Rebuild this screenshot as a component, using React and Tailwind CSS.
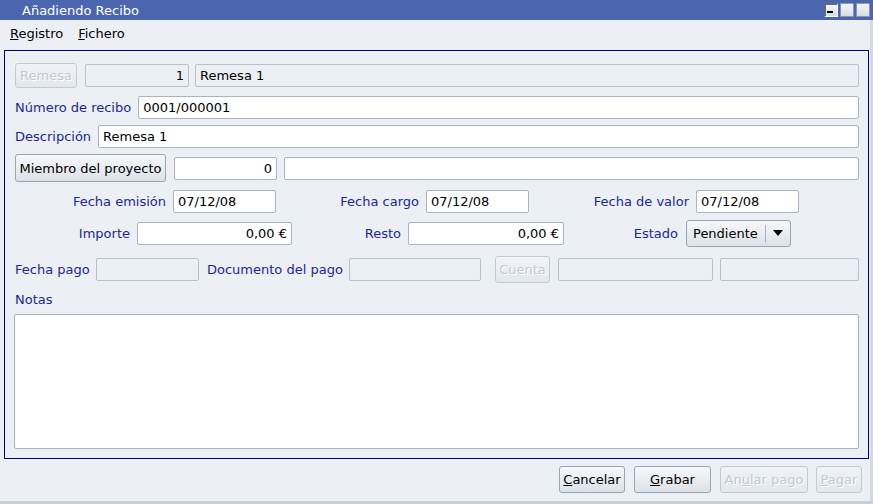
import React from 'react';

const font = { fontFamily: '"DejaVu Sans", Verdana, sans-serif' };

const Field = ({ w, value = '', right, disabled, grow }) => (
  <div
    className={`h-[23px] border rounded-[2px] flex items-center px-[4px] pt-[1px] whitespace-nowrap overflow-hidden text-black ${
      disabled ? 'bg-[#eceff4] border-[#b6c1ce]' : 'bg-white border-[#a7b4c4]'
    } ${right ? 'justify-end' : 'justify-start'} ${grow ? 'flex-1' : 'shrink-0'}`}
    style={grow ? undefined : { width: w }}
  >
    {value}
  </div>
);

const Label = ({ children, w, right }) => (
  <div
    className={`text-[#1b2792] whitespace-nowrap shrink-0 pt-[2px] ${right ? 'text-right' : ''}`}
    style={w ? { width: w } : undefined}
  >
    {children}
  </div>
);

const Button = ({ children, w, h = 27, disabled }) => (
  <div
    className={`shrink-0 flex items-center justify-center rounded-[3px] border whitespace-nowrap pt-[1px] ${
      disabled
        ? 'border-[#c3cad4] bg-gradient-to-b from-[#f1f3f6] to-[#e3e7ed] text-[#c3c9d1] [text-shadow:1px_1px_0_#ffffff]'
        : 'border-[#98a3b3] bg-gradient-to-b from-[#f6f7f9] to-[#dde2e9] text-black'
    }`}
    style={{ width: w, height: h }}
  >
    {children}
  </div>
);

export default function App() {
  return (
    <div className="w-[873px] h-[504px] bg-[#eceff4] text-[13px] flex flex-col overflow-hidden" style={font}>
      {/* title bar */}
      <div className="h-[20px] bg-[#4b65af] flex items-center shrink-0">
        <div className="pl-[22px] text-white flex-1 leading-none">Añadiendo Recibo</div>
        <div className="flex gap-[2px] pr-[3px] items-center">
          <div className="w-[14px] h-[14px] border-l-2 border-t-2 border-[#5a6a80] border-r border-b border-r-white border-b-white bg-gradient-to-b from-[#f2f4f7] to-[#d8dde5] flex items-end pl-[1px] pb-[3px]">
            <div className="w-[6px] h-[2px] bg-black" />
          </div>
          <div className="w-[14px] h-[14px] border border-[#8b97a8] bg-gradient-to-b from-[#f2f4f7] to-[#d8dde5]" />
          <div className="w-[14px] h-[14px] border border-[#8b97a8] bg-gradient-to-b from-[#f2f4f7] to-[#d8dde5]" />
        </div>
      </div>

      <div className="flex-1 flex flex-col border-r-[3px] border-[#d3d9e1]">
        {/* menu bar */}
        <div className="h-[26px] pt-[1px] flex items-center gap-[15px] pl-[10px] text-black shrink-0">
          <span><span className="underline">R</span>egistro</span>
          <span><span className="underline">F</span>ichero</span>
        </div>

        {/* main frame */}
        <div className="mt-[4px] ml-[4px] mr-[1px] border border-[#000080] pt-[11px] pl-[10px] pr-[9px] pb-[9px] flex flex-col">
          <div className="h-[26px] flex items-center">
            <Button w={62} h={25} disabled>Remesa</Button>
            <div className="w-[8px]" />
            <Field w={104} value="1" right disabled />
            <div className="w-[6px]" />
            <Field grow value="Remesa 1" disabled />
          </div>

          <div className="h-[26px] mt-[6px] flex items-center gap-[7px]">
            <Label>Número de recibo</Label>
            <Field grow value="0001/000001" />
          </div>

          <div className="h-[26px] mt-[3px] flex items-center gap-[7px]">
            <Label>Descripción</Label>
            <Field grow value="Remesa 1" />
          </div>

          <div className="h-[28px] mt-[5px] flex items-center">
            <Button w={151} h={28}>Miembro del proyecto</Button>
            <div className="w-[8px]" />
            <Field w={103} value="0" right />
            <div className="w-[7px]" />
            <Field grow />
          </div>

          <div className="h-[26px] mt-[6px] flex items-center">
            <Label w={151} right>Fecha emisión</Label>
            <div className="w-[7px]" />
            <Field w={103} value="07/12/08" />
            <Label w={143} right>Fecha cargo</Label>
            <div className="w-[7px]" />
            <Field w={103} value="07/12/08" />
            <Label w={160} right>Fecha de valor</Label>
            <div className="w-[7px]" />
            <Field w={103} value="07/12/08" />
          </div>

          <div className="h-[28px] mt-[5px] flex items-center">
            <Label w={115} right>Importe</Label>
            <div className="w-[7px]" />
            <Field w={155} value="0,00 €" right />
            <Label w={109} right>Resto</Label>
            <div className="w-[7px]" />
            <Field w={156} value="0,00 €" right />
            <Label w={114} right>Estado</Label>
            <div className="w-[8px]" />
            <div className="w-[105px] h-[27px] shrink-0 flex items-center rounded-[3px] border border-[#98a3b3] bg-gradient-to-b from-[#f6f7f9] to-[#dde2e9] text-black">
              <span className="pl-[6px] pt-[1px] flex-1">Pendiente</span>
              <div className="w-px h-[17px] bg-[#a6b0be]" />
              <div className="w-[24px] flex justify-center">
                <svg width="10" height="6" viewBox="0 0 10 6">
                  <path d="M0 0 L10 0 L5 6 Z" fill="#000" />
                </svg>
              </div>
            </div>
          </div>

          <div className="h-[28px] mt-[8px] flex items-center">
            <Label w={73}>Fecha pago</Label>
            <div className="w-[8px]" />
            <Field w={103} disabled />
            <div className="w-[8px]" />
            <Label w={135}>Documento del pago</Label>
            <div className="w-[7px]" />
            <Field w={132} disabled />
            <div className="w-[14px]" />
            <Button w={55} h={27} disabled>Cuenta</Button>
            <div className="w-[8px]" />
            <Field w={155} disabled />
            <div className="w-[7px]" />
            <Field grow disabled />
          </div>

          <div className="h-[16px] mt-[8px] flex items-center">
            <Label>Notas</Label>
          </div>

          <div className="mt-[7px] h-[135px] bg-white border border-[#a7b4c4] rounded-[2px] -ml-[1px]" />
        </div>

        {/* bottom buttons */}
        <div className="h-[28px] mt-[6px] flex justify-end items-center pr-[8px] text-black">
          <Button w={66}><span><span className="underline">C</span>ancelar</span></Button>
          <div className="w-[9px]" />
          <Button w={77}><span><span className="underline">G</span>rabar</span></Button>
          <div className="w-[9px]" />
          <Button w={88} disabled><span>An<span className="underline">u</span>lar pago</span></Button>
          <div className="w-[8px]" />
          <Button w={46} disabled><span><span className="underline">P</span>agar</span></Button>
        </div>
      </div>
      <div className="h-[3px] bg-[#c9d0d9] shrink-0" />
    </div>
  );
}
